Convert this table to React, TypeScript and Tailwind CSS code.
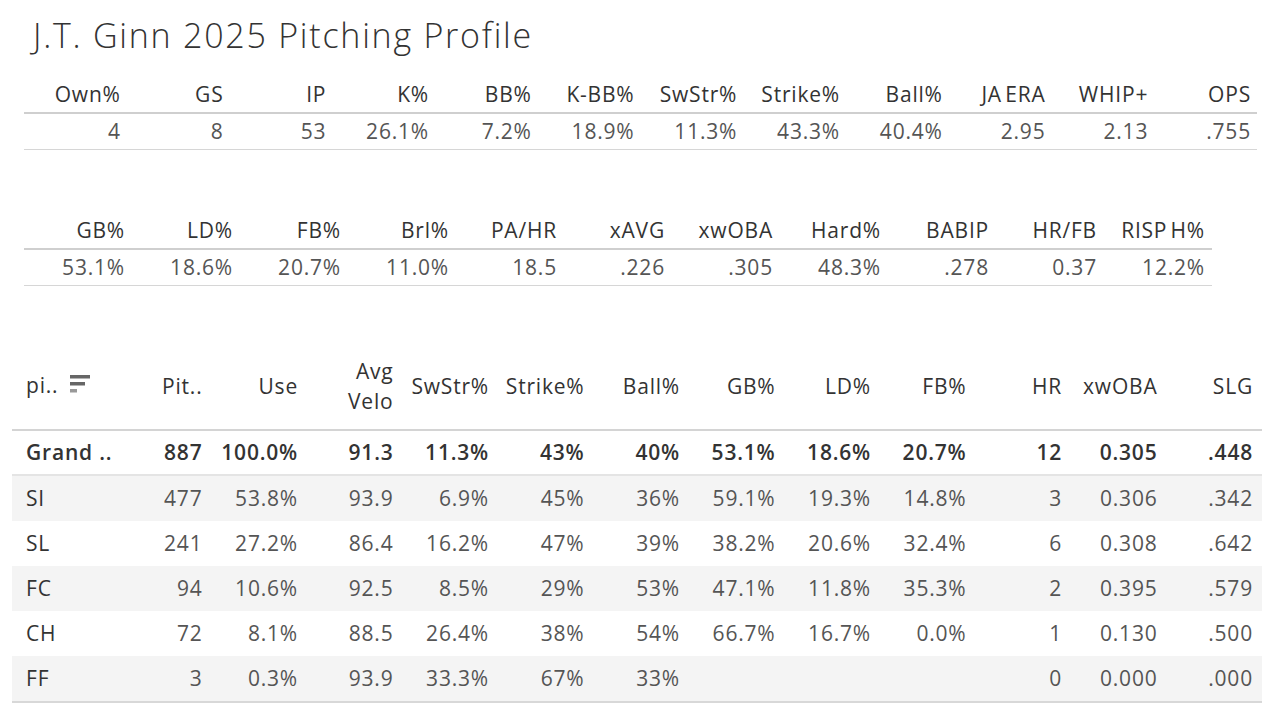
import React from 'react';

const font = { fontFamily: '"Open Sans", "Noto Sans", sans-serif' };

const summaryHead = ['Own%', 'GS', 'IP', 'K%', 'BB%', 'K-BB%', 'SwStr%', 'Strike%', 'Ball%', 'JA ERA', 'WHIP+', 'OPS'];
const summaryVals = ['4', '8', '53', '26.1%', '7.2%', '18.9%', '11.3%', '43.3%', '40.4%', '2.95', '2.13', '.755'];

const battedHead = ['GB%', 'LD%', 'FB%', 'Brl%', 'PA/HR', 'xAVG', 'xwOBA', 'Hard%', 'BABIP', 'HR/FB', 'RISP H%'];
const battedVals = ['53.1%', '18.6%', '20.7%', '11.0%', '18.5', '.226', '.305', '48.3%', '.278', '0.37', '12.2%'];

const pitchHead = ['Pit..', 'Use', 'Avg Velo', 'SwStr%', 'Strike%', 'Ball%', 'GB%', 'LD%', 'FB%', 'HR', 'xwOBA', 'SLG'];

const pitchRows = [
  { name: 'Grand ..', vals: ['887', '100.0%', '91.3', '11.3%', '43%', '40%', '53.1%', '18.6%', '20.7%', '12', '0.305', '.448'] },
  { name: 'SI', vals: ['477', '53.8%', '93.9', '6.9%', '45%', '36%', '59.1%', '19.3%', '14.8%', '3', '0.306', '.342'] },
  { name: 'SL', vals: ['241', '27.2%', '86.4', '16.2%', '47%', '39%', '38.2%', '20.6%', '32.4%', '6', '0.308', '.642'] },
  { name: 'FC', vals: ['94', '10.6%', '92.5', '8.5%', '29%', '53%', '47.1%', '11.8%', '35.3%', '2', '0.395', '.579'] },
  { name: 'CH', vals: ['72', '8.1%', '88.5', '26.4%', '38%', '54%', '66.7%', '16.7%', '0.0%', '1', '0.130', '.500'] },
  { name: 'FF', vals: ['3', '0.3%', '93.9', '33.3%', '67%', '33%', '', '', '', '0', '0.000', '.000'] },
];

const SortIcon = () => (
  <svg width="22" height="19" viewBox="0 0 22 19" className="ml-[12px] mt-[-6px]">
    <rect x="0" y="1" width="20" height="3.5" fill="#666" />
    <rect x="0" y="8" width="15" height="3.5" fill="#666" />
    <rect x="0" y="15" width="7" height="3.5" fill="#999" />
  </svg>
);

export default function App() {
  return (
    <div className="w-[1272px] h-[706px] bg-white overflow-hidden text-[#333]" style={font}>
      <h1 className="pl-[33px] pt-[12px] h-[58px] text-[34px] font-light leading-[46px] tracking-[1.75px]">
        J.T. Ginn 2025 Pitching Profile
      </h1>

      {/* summary table */}
      <div className="ml-[24px] w-[1233px] mt-[20px] text-[21px] tracking-[0.8px]">
        <div className="grid grid-cols-12 h-[36px] items-center border-b-2 border-[#cfcfcf]">
          {summaryHead.map((h) => (
            <div key={h} className="text-right pr-[6px] whitespace-nowrap [word-spacing:-3px]">{h}</div>
          ))}
        </div>
        <div className="grid grid-cols-12 h-[36px] items-center border-b border-[#d6d6d6] text-[#555]">
          {summaryVals.map((v, i) => (
            <div key={i} className="text-right pr-[6px]">{v}</div>
          ))}
        </div>
      </div>

      {/* batted ball table */}
      <div className="ml-[24px] w-[1188px] mt-[64px] text-[21px] tracking-[0.8px]">
        <div className="grid grid-cols-11 h-[36px] items-center border-b-2 border-[#cfcfcf]">
          {battedHead.map((h) => (
            <div key={h} className="text-right pr-[7px] whitespace-nowrap [word-spacing:-3px]">{h}</div>
          ))}
        </div>
        <div className="grid grid-cols-11 h-[36px] items-center border-b border-[#d6d6d6] text-[#555]">
          {battedVals.map((v, i) => (
            <div key={i} className="text-right pr-[7px]">{v}</div>
          ))}
        </div>
      </div>

      {/* pitch type table */}
      <div className="ml-[12px] w-[1250px] mt-[70px] text-[21px] tracking-[0.8px]">
        <div className="grid grid-cols-[101px_repeat(12,95.5px)] h-[75px] items-center pb-[14px] border-b-2 border-[#d4d4d4]">
          <div className="flex items-center pl-[14px]">
            <span>pi..</span>
            <SortIcon />
          </div>
          {pitchHead.map((h) => (
            <div key={h} className="text-right pr-[6px] leading-[30px] whitespace-nowrap">
              {h === 'Avg Velo' ? (
                <>
                  Avg
                  <br />
                  Velo
                </>
              ) : (
                h
              )}
            </div>
          ))}
        </div>
        {pitchRows.map((r, ri) => (
          <div
            key={r.name}
            className={
              ri === 0
                ? 'grid grid-cols-[101px_repeat(12,95.5px)] h-[45px] items-center border-b-2 border-[#e4e4e4] font-semibold text-[#333]'
                : ri % 2 === 1
                ? 'grid grid-cols-[101px_repeat(12,95.5px)] h-[45px] items-center bg-[#f4f4f4] text-[#555]'
                : 'grid grid-cols-[101px_repeat(12,95.5px)] h-[45px] items-center bg-white text-[#555]'
            }
          >
            <div className={ri === 0 ? 'pl-[14px] whitespace-nowrap' : 'pl-[14px] text-[#333]'}>{r.name}</div>
            {r.vals.map((v, i) => (
              <div key={i} className="text-right pr-[6px]">{v}</div>
            ))}
          </div>
        ))}
        <div className="h-[2px] bg-[#d8d8d8]" />
      </div>
    </div>
  );
}
